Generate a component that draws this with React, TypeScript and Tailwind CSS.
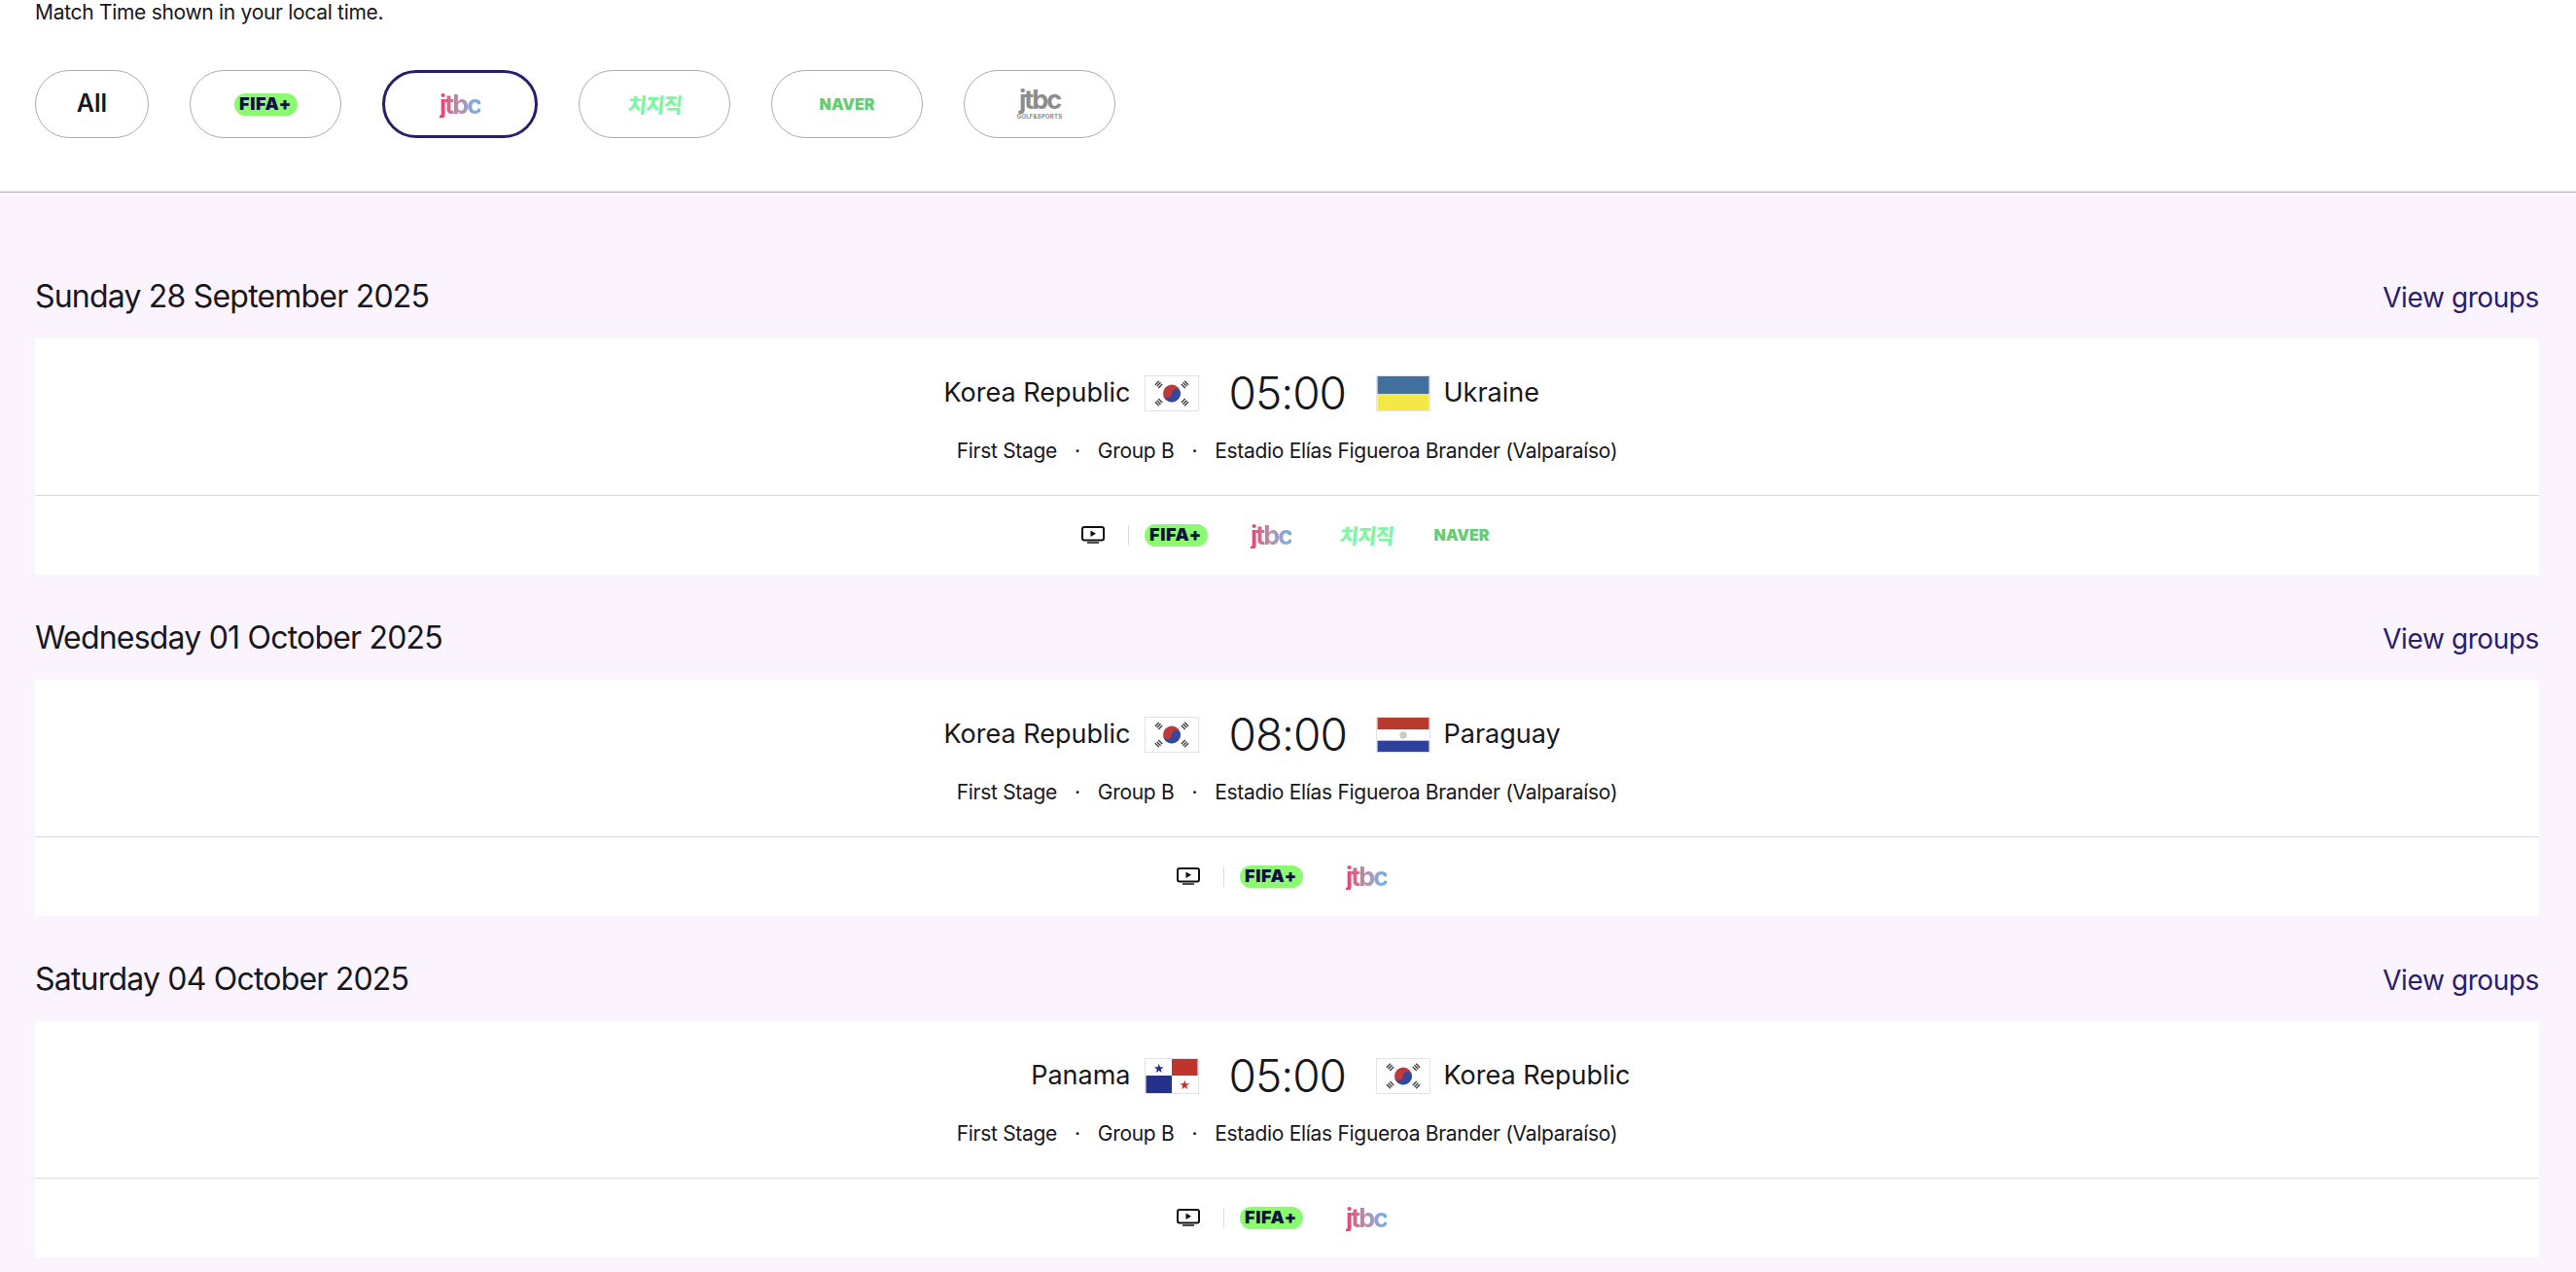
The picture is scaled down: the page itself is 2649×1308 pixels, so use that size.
const font = { fontFamily: "Inter, 'Noto Sans', sans-serif" };

const FifaLogo = () => (
  <div className="flex h-[23px] w-[65px] items-center justify-center rounded-full bg-[#8cfa70] text-[18px] leading-none font-black tracking-[0.6px] text-[#0f1240]">
    FIFA+
  </div>
);

const JtbcLogo = () => (
  <div className="flex h-[23px] w-[65px] items-center justify-center">
    <span className="bg-gradient-to-r from-[#e23c6c] via-[#b48fb0] to-[#62b4ee] bg-clip-text text-[27px] leading-none font-bold tracking-[-2px] text-transparent">
      jtbc
    </span>
  </div>
);

const ChzzkLogo = () => (
  <div className="flex h-[23px] w-[65px] items-center justify-center">
    <span className="-skew-x-6 text-[21px] leading-none font-black tracking-[-1px] text-[#7ff5a8]" style={{ fontFamily: "'Noto Sans CJK KR', sans-serif" }}>
      치지직
    </span>
  </div>
);

const NaverLogo = () => (
  <div className="flex h-[23px] w-[65px] items-center justify-center text-[16px] leading-none font-black text-[#68cc6c]">
    NAVER
  </div>
);

const GolfLogo = () => (
  <div className="flex w-[65px] flex-col items-center text-[#8c8c8c]">
    <span className="text-[27px] leading-[24px] font-bold tracking-[-2px]">jtbc</span>
    <span className="mt-[1px] text-[6px] leading-[8px] font-bold tracking-[0.2px] whitespace-nowrap">GOLF&amp;SPORTS</span>
  </div>
);

const TvIcon = () => (
  <svg width="24" height="18" viewBox="0 0 24 18" fill="none">
    <rect x="1" y="1" width="22" height="13.5" rx="2" stroke="#111" strokeWidth="2" />
    <path d="M9.5 4.5v6.5l5.5-3.25z" fill="#111" />
    <path d="M6 17h12" stroke="#111" strokeWidth="1.5" />
  </svg>
);

const KoreaFlag = () => (
  <svg width="56" height="37" viewBox="0 0 56 37" className="border border-[#e2e2ea]">
    <rect width="56" height="37" fill="#fff" />
    <circle cx="28" cy="18.5" r="9.5" fill="#c0393b" />
    <path d="M18.5 18.5a4.75 4.75 0 0 0 9.5 0a4.75 4.75 0 0 1 9.5 0a9.5 9.5 0 0 1-19 0z" fill="#2f4a9e" />
    <g stroke="#444" strokeWidth="6" strokeDasharray="1.5 1">
      <path d="M11.5 6.5l5 5" />
      <path d="M44.5 6.5l-5 5" />
      <path d="M11.5 30.5l5-5" />
      <path d="M44.5 30.5l-5-5" />
    </g>
  </svg>
);

const UkraineFlag = () => (
  <svg width="56" height="37" viewBox="0 0 56 37" className="border border-[#e2e2ea]">
    <rect width="56" height="19" fill="#41709f" />
    <rect y="19" width="56" height="18" fill="#f4e849" />
  </svg>
);

const ParaguayFlag = () => (
  <svg width="56" height="37" viewBox="0 0 56 37" className="border border-[#e2e2ea]">
    <rect width="56" height="13" fill="#b83a2c" />
    <rect y="13" width="56" height="12" fill="#fff" />
    <rect y="25" width="56" height="12" fill="#2e3f9e" />
    <circle cx="28" cy="19" r="4" fill="#c8d0c0" />
  </svg>
);

const PanamaFlag = () => (
  <svg width="56" height="37" viewBox="0 0 56 37" className="border border-[#e2e2ea]">
    <rect width="56" height="37" fill="#fff" />
    <rect x="28" width="28" height="18" fill="#c0352b" />
    <rect y="18" width="28" height="19" fill="#25308a" />
    <path d="M14 5l1.3 3.7h3.9l-3.1 2.4 1.1 3.7-3.2-2.2-3.2 2.2 1.1-3.7-3.1-2.4h3.9z" fill="#25308a" />
    <path d="M42 23l1.3 3.7h3.9l-3.1 2.4 1.1 3.7-3.2-2.2-3.2 2.2 1.1-3.7-3.1-2.4h3.9z" fill="#c0352b" />
  </svg>
);

const chips = [
  { id: "all", w: "w-[117px]" },
  { id: "fifa", w: "w-[156px]", logo: <FifaLogo /> },
  { id: "jtbc", w: "w-[160px]", logo: <JtbcLogo />, active: true },
  { id: "chzzk", w: "w-[156px]", logo: <ChzzkLogo /> },
  { id: "naver", w: "w-[156px]", logo: <NaverLogo /> },
  { id: "golf", w: "w-[156px]", logo: <GolfLogo /> },
];

const days = [
  {
    date: "Sunday 28 September 2025",
    home: "Korea Republic",
    homeFlag: <KoreaFlag />,
    time: "05:00",
    away: "Ukraine",
    awayFlag: <UkraineFlag />,
    logos: [<FifaLogo key="f" />, <JtbcLogo key="j" />, <ChzzkLogo key="c" />, <NaverLogo key="n" />],
  },
  {
    date: "Wednesday 01 October 2025",
    home: "Korea Republic",
    homeFlag: <KoreaFlag />,
    time: "08:00",
    away: "Paraguay",
    awayFlag: <ParaguayFlag />,
    logos: [<FifaLogo key="f" />, <JtbcLogo key="j" />],
  },
  {
    date: "Saturday 04 October 2025",
    home: "Panama",
    homeFlag: <PanamaFlag />,
    time: "05:00",
    away: "Korea Republic",
    awayFlag: <KoreaFlag />,
    logos: [<FifaLogo key="f" />, <JtbcLogo key="j" />],
  },
];

export default function App() {
  return (
    <div className="h-[1308px] overflow-hidden bg-white text-[#17171c]" style={font}>
      <div className="h-[198px] border-b border-[#aaaabd] px-[36px]">
        <p className="text-[21px] leading-[26px] tracking-[-0.3px]">Match Time shown in your local time.</p>
        <div className="mt-[46px] flex gap-[42px]">
          {chips.map((c) => (
            <div
              key={c.id}
              className={`flex h-[70px] items-center justify-center rounded-full ${c.w} ${
                c.active ? "border-[3px] border-[#2b1c6e]" : "border border-[#aaaabd]"
              }`}
            >
              {c.logo ?? <span className="text-[25px] font-semibold">All</span>}
            </div>
          ))}
        </div>
      </div>

      <div className="h-[1110px] bg-[#fbf4fe] pt-[42px] pr-[38px] pl-[36px]">
        {days.map((d) => (
          <section key={d.date}>
            <div className="flex h-[108px] items-center justify-between pt-[21px]">
              <h2 className="text-[32px] leading-[45px] font-normal tracking-[-0.8px]">{d.date}</h2>
              <a className="mt-[3px] text-[28px] leading-[45px] tracking-[-0.4px] text-[#2b1c6e]">View groups</a>
            </div>
            <div className="bg-white">
              <div className="h-[162px] border-b border-[#d9d9e0] pt-[33px]">
                <div className="grid h-[46px] grid-cols-[1fr_auto_1fr] items-center gap-[31px]">
                  <div className="flex items-center justify-end gap-[14px]">
                    <span className="text-[27px]">{d.home}</span>
                    {d.homeFlag}
                  </div>
                  <span className="w-[120px] text-center text-[46px] leading-[46px] font-light tracking-[-1px]">{d.time}</span>
                  <div className="flex items-center gap-[14px]">
                    {d.awayFlag}
                    <span className="text-[27px]">{d.away}</span>
                  </div>
                </div>
                <div className="mt-[22px] flex h-[30px] items-center justify-center gap-[18px] text-[21px] tracking-[-0.3px]">
                  <span>First Stage</span>
                  <span>·</span>
                  <span>Group B</span>
                  <span>·</span>
                  <span>Estadio Elías Figueroa Brander (Valparaíso)</span>
                </div>
              </div>
              <div className="flex h-[81px] items-center justify-center pb-[1px]">
                <TvIcon />
                <div className="mr-[16px] ml-[24px] h-[21px] w-px bg-[#dcdce4]" />
                <div className="flex items-center gap-[33px]">{d.logos}</div>
              </div>
            </div>
          </section>
        ))}
      </div>
    </div>
  );
}
